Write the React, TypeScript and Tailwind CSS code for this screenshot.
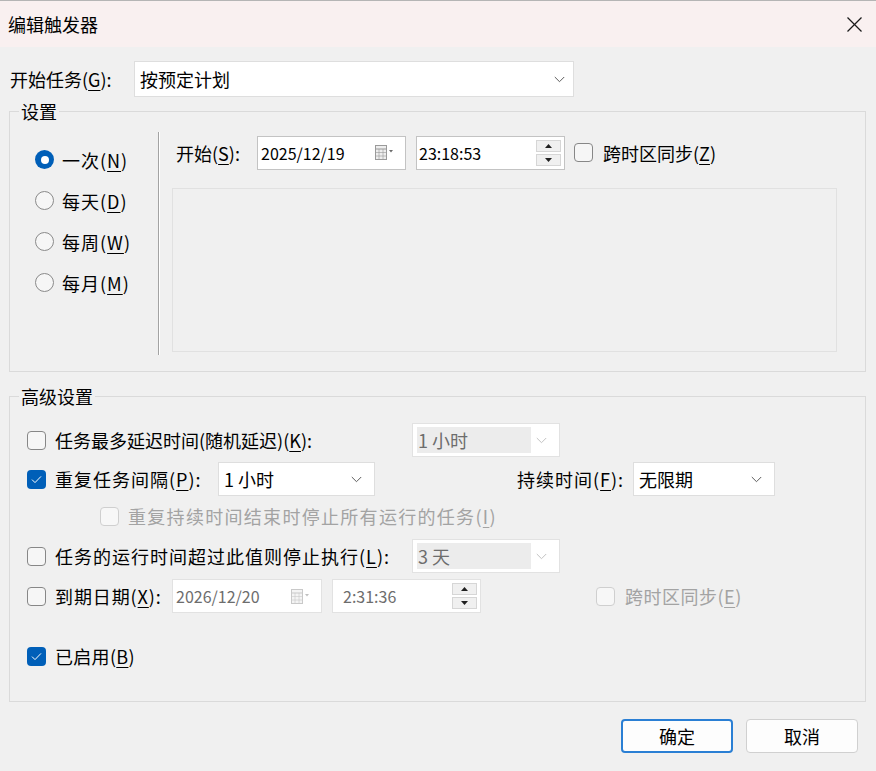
import React from "react";

const FONT = "font-['Noto_Sans_CJK_SC','Noto_Sans',sans-serif]";

function Key({ c }: { c: string }) {
  return <span className="underline decoration-1 underline-offset-[3px]">{c}</span>;
}

function Chevron({ dim }: { dim?: boolean }) {
  return (
    <svg width="11" height="7" viewBox="0 0 11 7" className="shrink-0">
      <polyline
        points="0.8,1 5.5,5.7 10.2,1"
        fill="none"
        stroke={dim ? "#c2c2c2" : "#5c5c5c"}
        strokeWidth="1"
      />
    </svg>
  );
}

function Combo({ text, w, h = 34, pr = 12 }: { text: string; w: number; h?: number; pr?: number }) {
  return (
    <div
      className="bg-white border border-[#dedede] flex items-center justify-between pl-[5px] shrink-0"
      style={{ width: w, height: h, paddingRight: pr }}
    >
      <span className="leading-[24px]">{text}</span>
      <Chevron />
    </div>
  );
}

function DisabledCombo({ text }: { text: string }) {
  return (
    <div className="w-[148px] h-[34px] bg-white border border-[#e2e2e2] flex items-center pl-[4px] pr-[12px] shrink-0">
      <div className="w-[114px] h-[26px] bg-[#ececec] flex items-center pl-[1px] text-[#6d6d6d] leading-[24px]">
        {text}
      </div>
      <div className="flex-1" />
      <Chevron dim />
    </div>
  );
}

function Checkbox({ checked, disabled }: { checked?: boolean; disabled?: boolean }) {
  if (checked) {
    return (
      <div className="w-[19px] h-[19px] rounded-[4px] bg-[#005fb8] flex items-center justify-center shrink-0">
        <svg width="11" height="9" viewBox="0 0 11 9">
          <polyline points="1,4.6 4,7.6 10,1.4" fill="none" stroke="#ffffff" strokeWidth="1" />
        </svg>
      </div>
    );
  }
  return (
    <div
      className={
        disabled
          ? "w-[19px] h-[19px] rounded-[4px] border border-[#cfcfcf] bg-[#f7f7f7] shrink-0"
          : "w-[19px] h-[19px] rounded-[4px] border border-[#878787] bg-[#f6f6f6] shrink-0"
      }
    />
  );
}

function Radio({ selected }: { selected?: boolean }) {
  if (selected) {
    return (
      <div className="w-[19px] h-[19px] rounded-full bg-[#005fb8] flex items-center justify-center shrink-0">
        <div className="w-[8px] h-[8px] rounded-full bg-white" />
      </div>
    );
  }
  return <div className="w-[19px] h-[19px] rounded-full border border-[#8a8a8a] bg-[#f6f6f6] shrink-0" />;
}

function CalendarIcon({ dim }: { dim?: boolean }) {
  const c = dim ? "#c9c9c9" : "#9a9a9a";
  return (
    <svg width="19" height="15" viewBox="0 0 19 15" className="shrink-0">
      <rect x="0.5" y="0.5" width="11" height="14" fill={dim ? "#f4f4f4" : "#eeeeee"} stroke={c} />
      <line x1="0.5" y1="4" x2="11.5" y2="4" stroke={c} />
      <line x1="0.5" y1="7.5" x2="11.5" y2="7.5" stroke={c} strokeOpacity="0.6" />
      <line x1="0.5" y1="11" x2="11.5" y2="11" stroke={c} strokeOpacity="0.6" />
      <line x1="4" y1="4" x2="4" y2="14.5" stroke={c} strokeOpacity="0.6" />
      <line x1="8" y1="4" x2="8" y2="14.5" stroke={c} strokeOpacity="0.6" />
      <polygon points="14,5 18,5 16,7.5" fill={dim ? "#c0c0c0" : "#6a6a6a"} />
    </svg>
  );
}

function Spinner() {
  return (
    <div className="flex flex-col gap-[2px] mr-[3px] shrink-0">
      <div className="w-[25px] h-[12px] bg-[#f0f0f0] border border-[#d6d6d6] flex items-center justify-center">
        <svg width="7" height="4" viewBox="0 0 7 4">
          <polygon points="0,4 7,4 3.5,0" fill="#202020" />
        </svg>
      </div>
      <div className="w-[25px] h-[12px] bg-[#f0f0f0] border border-[#d6d6d6] flex items-center justify-center">
        <svg width="7" height="4" viewBox="0 0 7 4">
          <polygon points="0,0 7,0 3.5,4" fill="#202020" />
        </svg>
      </div>
    </div>
  );
}

function DateBox({ text, w, dim }: { text: string; w: number; dim?: boolean }) {
  return (
    <div
      className={
        "h-[34px] bg-white border flex items-center pl-[3px] pr-[11px] shrink-0 " +
        (dim ? "border-[#e2e2e2] text-[#6d6d6d]" : "border-[#c3c3c3]")
      }
      style={{ width: w }}
    >
      <span className="flex-1 text-[16px] leading-[24px]">{text}</span>
      <CalendarIcon dim={dim} />
    </div>
  );
}

function TimeBox({ text, dim }: { text: string; dim?: boolean }) {
  return (
    <div
      className={
        "w-[149px] h-[34px] bg-white border flex items-center shrink-0 " +
        (dim ? "border-[#e2e2e2] text-[#6d6d6d] pl-[10px]" : "border-[#c3c3c3] pl-[2px]")
      }
    >
      <span className="flex-1 text-[16px] leading-[24px]">{text}</span>
      <Spinner />
    </div>
  );
}

function Button({ label, primary }: { label: string; primary?: boolean }) {
  return (
    <div
      className={
        "w-[112px] h-[34px] rounded-[4px] bg-[#fdfdfd] flex items-center justify-center leading-[24px] " +
        (primary ? "border-2 border-[#2a7fd4]" : "border border-[#d0d0d0]")
      }
    >
      {label}
    </div>
  );
}

function RadioRow({ label, k, selected }: { label: string; k: string; selected?: boolean }) {
  return (
    <div className="h-[41px] flex items-center gap-[8px]">
      <Radio selected={selected} />
      <span className="leading-[24px] tracking-[1px]">
        {label}(<Key c={k} />)
      </span>
    </div>
  );
}

export default function App() {
  return (
    <div className={"w-[876px] h-[771px] bg-[#f0f0f0] flex flex-col text-[18px] text-black overflow-hidden " + FONT}>
      {/* title bar */}
      <div className="h-[47px] shrink-0 bg-[#f9f0f0] border-t border-[#b5b5b5] flex items-center justify-between pl-[8px] pr-[14px]">
        <span className="leading-[24px]">编辑触发器</span>
        <svg width="15" height="15" viewBox="0 0 15 15">
          <line x1="0.5" y1="0.5" x2="14.5" y2="14.5" stroke="#1a1a1a" strokeWidth="1.2" />
          <line x1="14.5" y1="0.5" x2="0.5" y2="14.5" stroke="#1a1a1a" strokeWidth="1.2" />
        </svg>
      </div>

      {/* trigger type */}
      <div className="mt-[14px] h-[36px] flex items-center pl-[10px]">
        <span className="w-[124px] leading-[24px]">
          开始任务(<Key c="G" />):
        </span>
        <Combo text="按预定计划" w={440} h={36} pr={8} />
      </div>

      {/* schedule settings */}
      <fieldset className="mt-[5px] ml-[9px] mr-[10px] border border-[#dadada] p-0 pb-[16px] min-w-0">
        <legend className="ml-[9px] px-[2px] leading-[18px]">设置</legend>
        <div className="flex">
          <div className="w-[148px] pl-[25px] pt-[19px] flex flex-col">
            <RadioRow label="一次" k="N" selected />
            <RadioRow label="每天" k="D" />
            <RadioRow label="每周" k="W" />
            <RadioRow label="每月" k="M" />
          </div>
          <div className="mt-[12px] h-[223px] w-[2px] border-l border-[#a3a3a3] bg-white" />
          <div className="pl-[12px] flex flex-col">
            <div className="mt-[16px] h-[33px] flex items-center">
              <span className="w-[85px] pl-[4px] leading-[24px]">
                开始(<Key c="S" />):
              </span>
              <DateBox text="2025/12/19" w={149} />
              <div className="ml-[10px]">
                <TimeBox text="23:18:53" />
              </div>
              <div className="ml-[9px]">
                <Checkbox />
              </div>
              <span className="ml-[10px] leading-[24px]">
                跨时区同步(<Key c="Z" />)
              </span>
            </div>
            <div className="mt-[19px] w-[665px] h-[164px] border border-[#e1e1e1]" />
          </div>
        </div>
      </fieldset>

      {/* advanced settings */}
      <fieldset className="mt-[15px] ml-[9px] mr-[10px] border border-[#dadada] p-0 pb-[33px] min-w-0">
        <legend className="ml-[9px] px-[2px] leading-[18px]">高级设置</legend>
        <div className="pl-[17px] flex flex-col">
          <div className="mt-[18px] h-[34px] flex items-center">
            <Checkbox />
            <span className="ml-[9px] w-[357px] leading-[24px]">
              任务最多延迟时间(随机延迟)(<Key c="K" />):
            </span>
            <DisabledCombo text="1 小时" />
          </div>

          <div className="mt-[5px] h-[34px] flex items-center">
            <Checkbox checked />
            <span className="ml-[9px] w-[163px] leading-[24px] tracking-[1px]">
              重复任务间隔(<Key c="P" />):
            </span>
            <Combo text="1 小时" w={157} />
            <span className="ml-[142px] w-[116px] leading-[24px] tracking-[1px]">
              持续时间(<Key c="F" />):
            </span>
            <Combo text="无限期" w={142} />
          </div>

          <div className="mt-[8px] h-[24px] pl-[73px] flex items-center">
            <Checkbox disabled />
            <span className="ml-[9px] leading-[24px] tracking-[1.3px] text-[#a3a3a3]">
              重复持续时间结束时停止所有运行的任务(<Key c="I" />)
            </span>
          </div>

          <div className="mt-[11px] h-[34px] flex items-center">
            <Checkbox />
            <span className="ml-[9px] w-[357px] leading-[24px] tracking-[1px]">
              任务的运行时间超过此值则停止执行(<Key c="L" />):
            </span>
            <DisabledCombo text="3 天" />
          </div>

          <div className="mt-[6px] h-[34px] flex items-center">
            <Checkbox />
            <span className="ml-[9px] w-[117px] leading-[24px] tracking-[0.9px]">
              到期日期(<Key c="X" />):
            </span>
            <DateBox text="2026/12/20" w={150} dim />
            <div className="ml-[10px]">
              <TimeBox text="2:31:36" dim />
            </div>
            <div className="ml-[115px]">
              <Checkbox disabled />
            </div>
            <span className="ml-[10px] leading-[24px] tracking-[0.5px] text-[#a3a3a3]">
              跨时区同步(<Key c="E" />)
            </span>
          </div>

          <div className="mt-[31px] h-[24px] flex items-center">
            <Checkbox checked />
            <span className="ml-[9px] leading-[24px] tracking-[0.3px]">
              已启用(<Key c="B" />)
            </span>
          </div>
        </div>
      </fieldset>

      {/* dialog buttons */}
      <div className="mt-[17px] flex justify-end gap-[13px] pr-[18px]">
        <Button label="确定" primary />
        <Button label="取消" />
      </div>
    </div>
  );
}
